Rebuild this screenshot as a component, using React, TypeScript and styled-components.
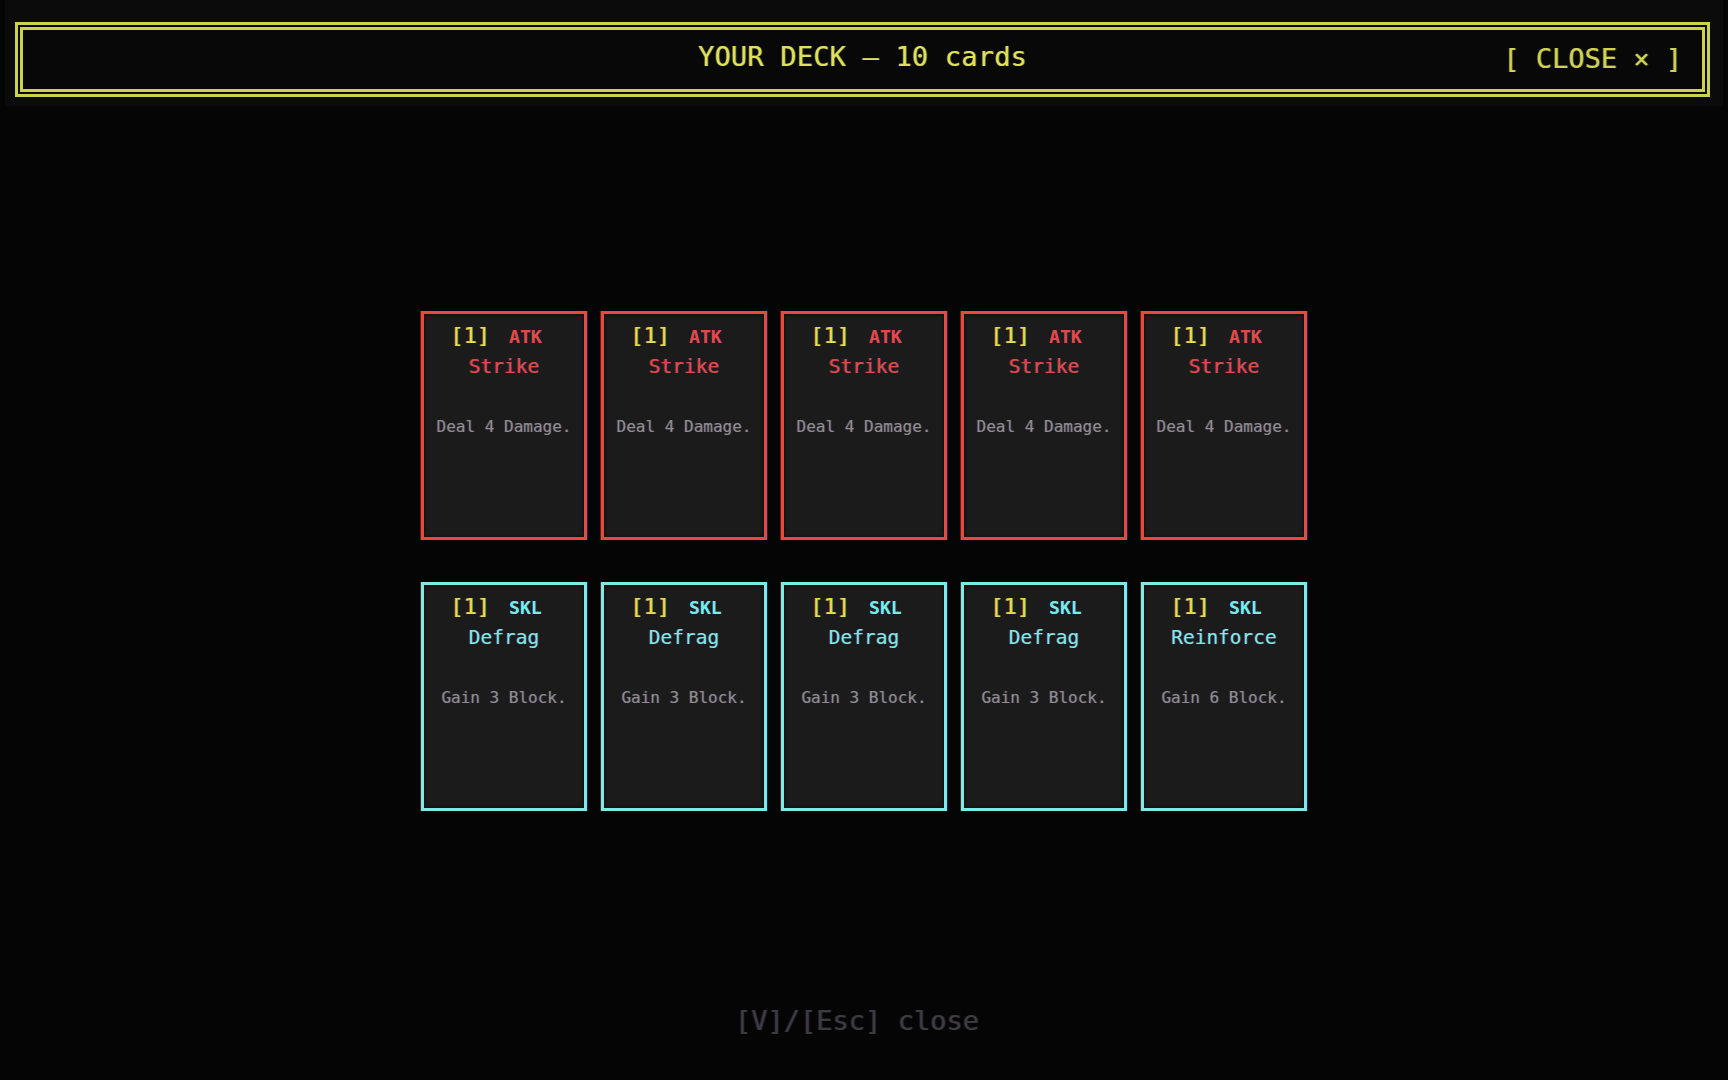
import styled, { createGlobalStyle } from 'styled-components';

const GlobalStyle = createGlobalStyle`
  html, body {
    margin: 0;
    padding: 0;
    background: #050505;
  }
  body {
    font-family: 'DejaVu Sans Mono', 'Liberation Mono', monospace;
  }
`;

const Screen = styled.div`
  height: 100vh;
  display: grid;
  grid-template-rows: auto 1fr auto;
  background: #050505;
  overflow: hidden;
`;

const HeaderPanel = styled.div`
  margin: 0 5px;
  padding: 22px 13px 9px 10px;
  background: #0b0b0b;
`;

const HeaderFrame = styled.div`
  position: relative;
  height: 59px;
  border: 8px double #cdd24c;
  display: flex;
  align-items: center;
  justify-content: center;
  background: #080808;
`;

const Title = styled.h1`
  margin: 0 0 6px;
  font-size: 27px;
  font-weight: normal;
  color: #e0e05a;
  letter-spacing: 0.2px;
  text-shadow: -1px 0 rgba(255, 60, 40, 0.3), 1px 0 rgba(40, 200, 120, 0.45);
`;

// sits over the right end of the frame
const CloseButton = styled.button`
  position: absolute;
  right: 20px;
  top: 50%;
  transform: translateY(-55%);
  background: none;
  border: none;
  padding: 0;
  font-family: inherit;
  font-size: 27px;
  color: #d2d252;
  cursor: pointer;
  white-space: pre;
  text-shadow: -1px 0 rgba(255, 60, 40, 0.3), 1px 0 rgba(40, 200, 120, 0.45);
`;

const Main = styled.main`
  display: flex;
  flex-direction: column;
  align-items: center;
  justify-content: center;
  gap: 42px;
  padding-top: 10px;
`;

const Row = styled.div`
  display: flex;
  gap: 14px;
`;

const Card = styled.div<{ $tone: string }>`
  width: 166px;
  height: 229px;
  box-sizing: border-box;
  border: 3px solid ${(p) => p.$tone};
  background: #1b1b1b;
  box-shadow: -1px 0 0 rgba(255, 80, 60, 0.35), 1px 0 0 rgba(60, 80, 255, 0.35),
    0 0 4px rgba(0, 0, 0, 0.6) inset;
  display: flex;
  flex-direction: column;
  align-items: center;
  padding-top: 9px;
`;

const CardTop = styled.div`
  display: flex;
  align-items: baseline;
  gap: 19px;
  height: 28px;
  margin-left: -16px;
`;

const Cost = styled.span`
  font-size: 22px;
  color: #e4de4c;
  text-shadow: -1px 0 rgba(255, 50, 40, 0.6), 1px 0 rgba(40, 220, 110, 0.6);
`;

const Kind = styled.span<{ $tone: string }>`
  font-size: 18px;
  font-weight: bold;
  color: ${(p) => p.$tone};
  text-shadow: 1px 0 rgba(60, 60, 255, 0.35);
`;

const Name = styled.div<{ $tone: string }>`
  font-size: 19.5px;
  color: ${(p) => p.$tone};
  margin-top: 3px;
  line-height: 26px;
  text-shadow: -1px 0 rgba(255, 80, 60, 0.3), 1px 0 rgba(60, 80, 255, 0.4);
`;

const Desc = styled.div`
  margin-top: 37px;
  font-size: 16px;
  color: #8d8f8d;
  text-shadow: -1px 0 rgba(200, 60, 60, 0.25), 1px 0 rgba(60, 100, 220, 0.3);
`;

const Footer = styled.footer`
  text-align: center;
  padding: 0 14px 43px 0;
  font-size: 27px;
  line-height: 32px;
  color: #3b3c40;
  text-shadow: -1px 0 rgba(120, 40, 40, 0.35), 1px 0 rgba(40, 60, 140, 0.35);
`;

type CardData = {
  name: string;
  kind: 'ATK' | 'SKL';
  cost: number;
  text: string;
};

const RED = '#e8493d';
const CYAN = '#79ece6';

const deck: CardData[] = [
  { name: 'Strike', kind: 'ATK', cost: 1, text: 'Deal 4 Damage.' },
  { name: 'Strike', kind: 'ATK', cost: 1, text: 'Deal 4 Damage.' },
  { name: 'Strike', kind: 'ATK', cost: 1, text: 'Deal 4 Damage.' },
  { name: 'Strike', kind: 'ATK', cost: 1, text: 'Deal 4 Damage.' },
  { name: 'Strike', kind: 'ATK', cost: 1, text: 'Deal 4 Damage.' },
  { name: 'Defrag', kind: 'SKL', cost: 1, text: 'Gain 3 Block.' },
  { name: 'Defrag', kind: 'SKL', cost: 1, text: 'Gain 3 Block.' },
  { name: 'Defrag', kind: 'SKL', cost: 1, text: 'Gain 3 Block.' },
  { name: 'Defrag', kind: 'SKL', cost: 1, text: 'Gain 3 Block.' },
  { name: 'Reinforce', kind: 'SKL', cost: 1, text: 'Gain 6 Block.' },
];

const DeckCard = ({ card }: { card: CardData }) => {
  const tone = card.kind === 'ATK' ? RED : CYAN;
  return (
    <Card $tone={tone}>
      <CardTop>
        <Cost>[{card.cost}]</Cost>
        <Kind $tone={tone}>{card.kind}</Kind>
      </CardTop>
      <Name $tone={tone}>{card.name}</Name>
      <Desc>{card.text}</Desc>
    </Card>
  );
};

const App = () => {
  const rows = [deck.slice(0, 5), deck.slice(5, 10)];

  return (
    <Screen>
      <GlobalStyle />
      <HeaderPanel>
        <HeaderFrame>
          <Title>YOUR DECK — {deck.length} cards</Title>
          <CloseButton>[ CLOSE × ]</CloseButton>
        </HeaderFrame>
      </HeaderPanel>
      <Main>
        {rows.map((row, i) => (
          <Row key={i}>
            {row.map((card, j) => (
              <DeckCard key={j} card={card} />
            ))}
          </Row>
        ))}
      </Main>
      <Footer>[V]/[Esc] close</Footer>
    </Screen>
  );
};

export default App;
